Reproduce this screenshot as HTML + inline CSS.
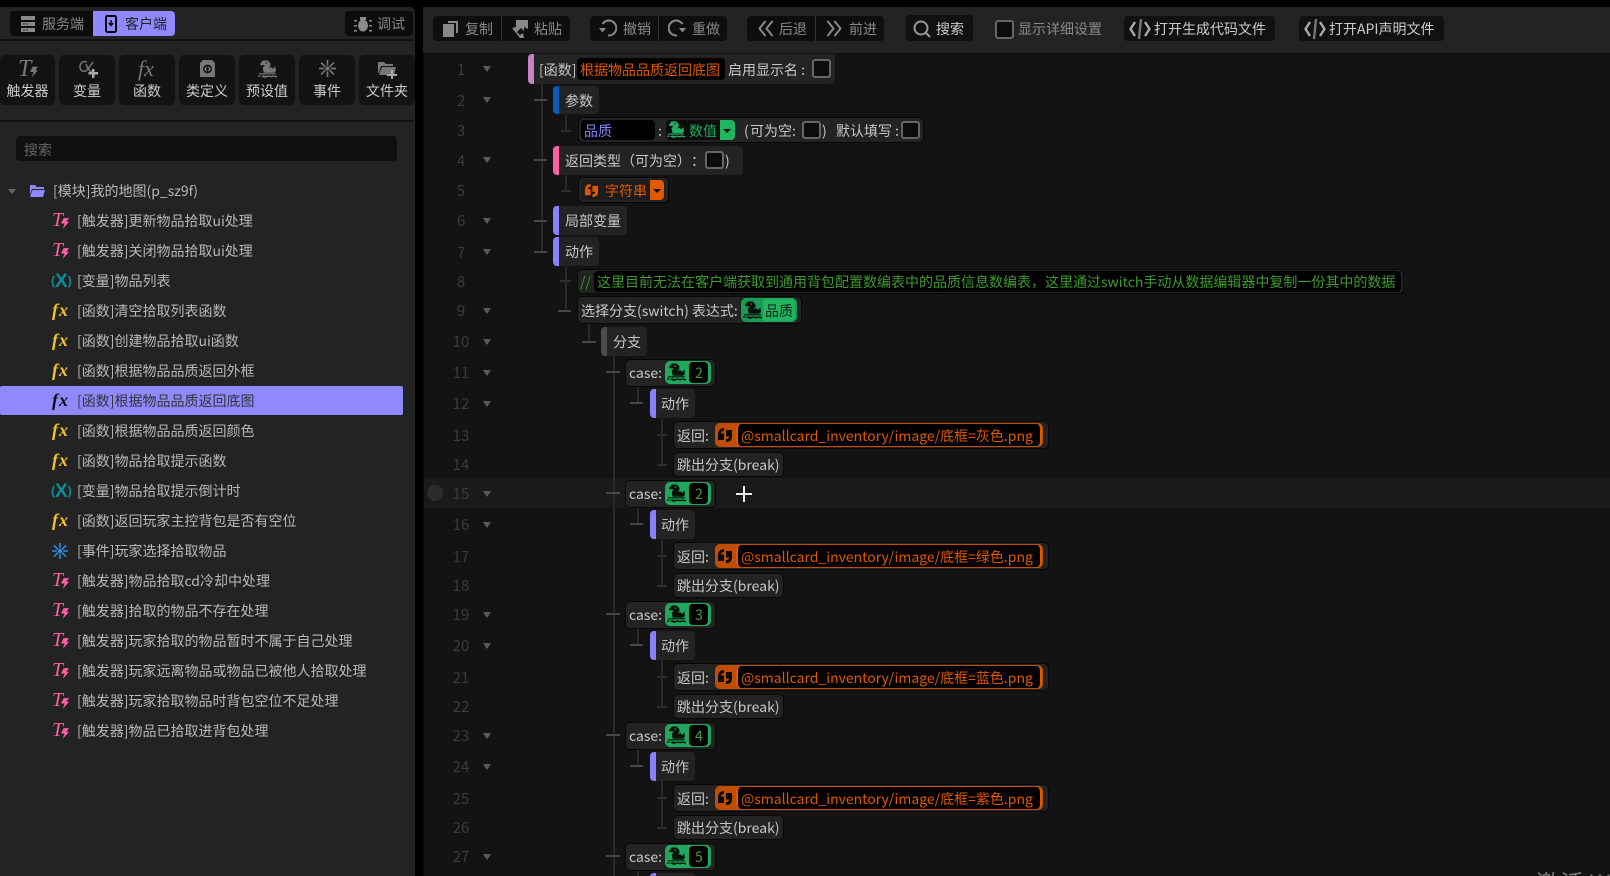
<!DOCTYPE html>
<html lang="zh"><head><meta charset="utf-8"><title>编辑器</title>
<style>
html,body{margin:0;padding:0;background:#000;width:1610px;height:876px;overflow:hidden}
body{position:relative;font:14px "Noto Sans CJK SC","Liberation Sans",sans-serif;color:#c8c8c8;text-spacing-trim:space-all}
div,span,svg{position:absolute;white-space:nowrap}
.bx{background:#111;border-radius:4px}
.g{color:#888}.w{color:#ccc}
.tl{top:16px;height:25px;line-height:27px}
.tool{top:55px;height:50px;width:56px;background:#131313;border-radius:5px;text-align:center;color:#ccc}
.tool .lb{left:0;width:100%;top:25px;line-height:22px}
.it{left:0;width:403px;height:30px;line-height:30px;color:#b8b8b8}
.it .tx{left:77px;top:0}
.fx{left:52px;top:0;font:italic bold 18px/29px "Liberation Serif",serif;color:#f2c32c;letter-spacing:1px}
.T{left:52px;top:0;font:italic 20px/28px "Liberation Serif",serif;color:#ff5fa2}
.bolt{left:61px;top:12px;fill:#ff5fa2}
.X{left:51px;top:0;font:bold 19px/30px "Liberation Sans",sans-serif;color:#0e8d96}
.X small{font-size:12px;vertical-align:2px}
.r{left:0;width:1610px}
.r>span{top:1px;height:100%}
.r>.k,.r>.kb,.r>.bar{top:0}
.k{background:#232323;border-radius:4px;box-sizing:border-box}
.kb{background:#232323;border:1px solid #070707;border-radius:5px;box-sizing:border-box}
.bar{width:6px;border-radius:4px 0 0 4px}
.n{left:441px;width:40px;height:24px;line-height:26px;text-align:center;color:#3b3b3b;font-size:15px}
.tr{left:483px;width:0;height:0;border:4px solid transparent;border-top:6px solid #5a5a5a;border-bottom:0}
.c{width:19px;height:19px;border:2px solid #666;border-radius:3px;background:#0c0c0c;box-sizing:border-box}
.v{width:2px;background:#292929}.h{height:2px;background:#484848}.d{height:2px;background:#2e2e2e}
.or{color:#e05800}
.case{background:#1fa85e;border-radius:5px}
.gr{left:0;width:1610px;height:121px}
</style></head><body>
<svg width="0" height="0" style="position:absolute"><defs>
<symbol id="frog" viewBox="0 0 20 18"><path fill-rule="evenodd" d="M2 4 5 0h5l3 3v3l-2 2 3-1 2 2 2-3 1 5-2 2H6L5 8l2-3H3zM8 2v1.500h1.500V2z"/><path d="M1 13.500h18v1.200H1zM0 16c2-1 3 1 5 0s3 1 5 0 3 1 5 0 3 1 5 0v1.500c-2 1-3-1-5 0s-3-1-5 0-3 1-5 0-3-1-5 0z"/></symbol>
<symbol id="q" viewBox="0 0 16 16"><path d="M1 8C1 3.500 3 1 7 1v3C5 4 4 5 4 6.500h3V13H1zM9 3h6v6.500c0 3.500-2 5.500-6 5.500v-3c2 0 3-1 3-2.500H9z"/></symbol>
<symbol id="ev" viewBox="0 0 20 20"><path d="M10 0v6.500M10 13.500V20M2.500 3l5 5M12.500 12l5 5M17.500 3l-5 5M7.500 12l-5 5M0 10h6M14 10h6" fill="none" stroke="currentColor" stroke-width="2"/><circle cx="10" cy="10" r="2.500" fill="currentColor"/></symbol>
<symbol id="bolt" viewBox="0 0 9 12"><path d="M3 0h6L6 4h3L2 12l2-6H0z"/></symbol>
<symbol id="code" viewBox="0 0 22 24"><path d="M6 5 1.500 12 6 19M16 5l4.500 7-4.500 7" fill="none" stroke="#aaa" stroke-width="2.400"/><path d="M12 2 10 22" stroke="#777" stroke-width="2.400"/></symbol>
</defs></svg>

<!-- left panel -->
<div style="left:0;top:7px;width:415px;height:869px;background:#232323;border-radius:0 5px 0 0"></div>
<div style="left:0;top:39px;width:413px;height:2px;background:#111"></div>
<div style="left:0;top:120px;width:413px;height:2px;background:#111"></div>
<div class="bx" style="left:10px;top:11px;width:165px;height:25px;background:#0c0c0c"></div>
<div style="left:93px;top:11px;width:82px;height:25px;background:#9088ff;border-radius:0 4px 4px 0"></div>
<svg style="left:21px;top:16px" width="14" height="16" viewBox="0 0 14 16"><path fill="#8a8a8a" d="M0 0h14v4H0zM0 6h14v4H0zM0 12h14v4H0z"/><path fill="#222" d="M2 13.500h2v1H2zM5 13.500h2v1H5zM2 7.500h2v1H2zM5 7.500h2v1H5z"/></svg>
<div class="g tl" style="left:42px;top:11px">服务端</div>
<svg style="left:105px;top:15px" width="12" height="18" viewBox="0 0 12 18"><rect x="1" y="1" width="10" height="16" rx="1.500" fill="none" stroke="#000" stroke-width="2"/><path d="M6 5v5M3.800 8 6 10.500 8.200 8" fill="none" stroke="#000" stroke-width="1.500"/></svg>
<div class="tl" style="left:125px;top:11px;color:#222">客户端</div>
<div class="bx" style="left:345px;top:11px;width:68px;height:25px;background:#0c0c0c"></div>
<svg style="left:354px;top:16px" width="18" height="16" viewBox="0 0 18 16" fill="#8a8a8a"><ellipse cx="9" cy="9.500" rx="5" ry="6"/><rect x="6" y="1" width="6" height="3"/><path d="M0 4h3v1.500H0zM15 4h3v1.500h-3zM0 9h3v1.500H0zM15 9h3v1.500h-3zM0 14h3v1.500H0zM15 14h3v1.500h-3z"/></svg>
<div class="g tl" style="left:377px;top:11px">调试</div>

<div class="tool" style="left:0;width:55px"><span class="lb">触发器</span>
 <span style="left:18px;top:2px;font:italic 24px/24px 'Liberation Serif',serif;color:#777">T</span><svg style="left:30px;top:11px;fill:#777" width="8" height="12"><use href="#bolt"/></svg></div>
<div class="tool" style="left:59px"><span class="lb">变量</span>
 <svg style="left:20px;top:5px" width="22" height="18" viewBox="0 0 22 18" fill="none"><path d="M8 2C3 0 1 4 1 7s4 7 8 2l5-7M7 4c2 6 4 8 8 8" stroke="#777" stroke-width="1.500"/><path d="M13 9h2.500v3H19v2.500h-3.500V18H13v-3.500H9.500V12H13z" fill="#aaa"/></svg></div>
<div class="tool" style="left:119px"><span class="lb">函数</span><span style="left:19px;top:1px;font:italic 22px/26px 'Liberation Serif',serif;color:#777">fx</span></div>
<div class="tool" style="left:179px"><span class="lb">类定义</span>
 <svg style="left:21px;top:5px" width="15" height="17" viewBox="0 0 15 17"><path d="M3 0h9l3 3v14H0V3z" fill="#777"/><circle cx="7.500" cy="9" r="4.500" fill="#1c1c1c"/><path d="M6.500 7 5 9l1.500 2M8.500 7 10 9l-1.500 2" fill="none" stroke="#999"/></svg></div>
<div class="tool" style="left:239px"><span class="lb">预设值</span><svg style="left:19px;top:5px;fill:#777" width="19" height="18"><use href="#frog"/></svg></div>
<div class="tool" style="left:299px"><span class="lb">事件</span><svg style="left:20px;top:5px;color:#777" width="17" height="17"><use href="#ev"/></svg></div>
<div class="tool" style="left:359px"><span class="lb">文件夹</span>
 <svg style="left:19px;top:7px" width="21" height="17" viewBox="0 0 21 17"><path d="M0 0h6l2 2h7v2H3L1 11H0zM4 5h14l-2 8H1z" fill="#777"/><path d="M13 8h2v4h4v2h-4v3h-2v-3H9v-2h4z" fill="#aaa"/></svg></div>

<div class="bx" style="left:16px;top:136px;width:381px;height:25px;line-height:28px;background:#101010"><span style="left:8px;top:0;color:#666">搜索</span></div>

<div style="left:8px;top:189px;width:0;height:0;border:4px solid transparent;border-top:5px solid #666;border-bottom:0"></div>
<svg style="left:29px;top:184px" width="16" height="14" viewBox="0 0 16 14"><path d="M0 1h6l1.500 2H15v2H3L1 11V1zM3.500 6H16l-2 7H1z" fill="#9088ff"/></svg>
<div class="it" style="top:176px"><span class="tx" style="left:53px">[模块]我的地图(p_sz9f)</span></div>

<div class="it" style="top:206px"><span class="T">T</span><svg class="bolt" width="8" height="11"><use href="#bolt"/></svg><span class="tx">[触发器]更新物品拾取ui处理</span></div>
<div class="it" style="top:236px"><span class="T">T</span><svg class="bolt" width="8" height="11"><use href="#bolt"/></svg><span class="tx">[触发器]关闭物品拾取ui处理</span></div>
<div class="it" style="top:266px"><span class="X"><small>(</small>X<small>)</small></span><span class="tx">[变量]物品列表</span></div>
<div class="it" style="top:296px"><span class="fx">fx</span><span class="tx">[函数]清空拾取列表函数</span></div>
<div class="it" style="top:326px"><span class="fx">fx</span><span class="tx">[函数]创建物品拾取ui函数</span></div>
<div class="it" style="top:356px"><span class="fx">fx</span><span class="tx">[函数]根据物品品质返回外框</span></div>
<div class="it" style="top:386px;height:29px;background:#9088ff;border-radius:2px;color:#333"><span class="fx" style="color:#0c0c0c">fx</span><span class="tx">[函数]根据物品品质返回底图</span></div>
<div class="it" style="top:416px"><span class="fx">fx</span><span class="tx">[函数]根据物品品质返回颜色</span></div>
<div class="it" style="top:446px"><span class="fx">fx</span><span class="tx">[函数]物品拾取提示函数</span></div>
<div class="it" style="top:476px"><span class="X"><small>(</small>X<small>)</small></span><span class="tx">[变量]物品拾取提示倒计时</span></div>
<div class="it" style="top:506px"><span class="fx">fx</span><span class="tx">[函数]返回玩家主控背包是否有空位</span></div>
<div class="it" style="top:536px"><svg style="left:52px;top:7px;color:#2a8fe6" width="16" height="16"><use href="#ev"/></svg><span class="tx">[事件]玩家选择拾取物品</span></div>
<div class="it" style="top:566px"><span class="T">T</span><svg class="bolt" width="8" height="11"><use href="#bolt"/></svg><span class="tx">[触发器]物品拾取cd冷却中处理</span></div>
<div class="it" style="top:596px"><span class="T">T</span><svg class="bolt" width="8" height="11"><use href="#bolt"/></svg><span class="tx">[触发器]拾取的物品不存在处理</span></div>
<div class="it" style="top:626px"><span class="T">T</span><svg class="bolt" width="8" height="11"><use href="#bolt"/></svg><span class="tx">[触发器]玩家拾取的物品暂时不属于自己处理</span></div>
<div class="it" style="top:656px"><span class="T">T</span><svg class="bolt" width="8" height="11"><use href="#bolt"/></svg><span class="tx">[触发器]玩家远离物品或物品已被他人拾取处理</span></div>
<div class="it" style="top:686px"><span class="T">T</span><svg class="bolt" width="8" height="11"><use href="#bolt"/></svg><span class="tx">[触发器]玩家拾取物品时背包空位不足处理</span></div>
<div class="it" style="top:716px"><span class="T">T</span><svg class="bolt" width="8" height="11"><use href="#bolt"/></svg><span class="tx">[触发器]物品已拾取进背包处理</span></div>

<!-- right top bar -->
<div style="left:423px;top:7px;width:1187px;height:46px;background:#232323"></div>
<div style="left:423px;top:53px;width:1187px;height:823px;background:#131313"></div>
<div style="left:423px;top:53px;width:1px;height:823px;background:#0a0a0a"></div>

<div class="bx" style="left:433px;top:16px;width:137px;height:25px;background:#0e0e0e"></div><div style="left:501px;top:16px;width:1px;height:25px;background:#333"></div>
<svg style="left:443px;top:21px" width="15" height="16" viewBox="0 0 15 16" fill="#888"><path d="M5 0h10v12h-2V2H5z"/><path d="M0 3h11v13H0z"/></svg>
<div class="g tl" style="left:465px">复制</div>
<svg style="left:512px;top:20px" width="16" height="18" viewBox="0 0 16 18" fill="#888"><path d="M4 0h12v9l-4-2v4L9 8 5 12l3 3 3-2 1 5H8L0 8l4-1z"/></svg>
<div class="g tl" style="left:534px">粘贴</div>

<div class="bx" style="left:590px;top:16px;width:137px;height:25px;background:#0e0e0e"></div><div style="left:658px;top:16px;width:1px;height:25px;background:#333"></div>
<svg style="left:599px;top:19px" width="18" height="18" viewBox="0 0 18 18" fill="none" stroke="#888" stroke-width="2"><path d="M3.500 5A7.500 7.500 0 1 1 9 16.500"/><path d="M0 9h7l-3.500 4.500z" fill="#888" stroke="none"/></svg>
<div class="g tl" style="left:623px">撤销</div>
<svg style="left:668px;top:19px" width="18" height="18" viewBox="0 0 18 18" fill="none" stroke="#888" stroke-width="2"><path d="M14.500 5A7.500 7.500 0 1 0 9 16.500"/><path d="M11 9h7l-3.500 4.500z" fill="#888" stroke="none"/></svg>
<div class="g tl" style="left:692px">重做</div>

<div class="bx" style="left:747px;top:16px;width:137px;height:25px;background:#0e0e0e"></div><div style="left:815px;top:16px;width:1px;height:25px;background:#333"></div>
<svg style="left:758px;top:20px" width="16" height="17" viewBox="0 0 16 17" fill="none" stroke="#888" stroke-width="2"><path d="M7.500 1 1.500 8.500l6 7.500M14.500 1l-6 7.500 6 7.500"/></svg>
<div class="g tl" style="left:779px">后退</div>
<svg style="left:826px;top:20px" width="16" height="17" viewBox="0 0 16 17" fill="none" stroke="#888" stroke-width="2"><path d="M1.500 1l6 7.500-6 7.500M8.500 1l6 7.500-6 7.500"/></svg>
<div class="g tl" style="left:849px">前进</div>

<div class="bx" style="left:906px;top:15px;width:67px;height:26px;background:#111"></div>
<svg style="left:913px;top:20px" width="18" height="18" viewBox="0 0 18 18" fill="none" stroke="#999" stroke-width="2"><circle cx="8" cy="8" r="6.500"/><path d="M13 13l4 4"/></svg>
<div class="w tl" style="left:936px">搜索</div>
<div class="c" style="left:995px;top:20px"></div>
<div class="g tl" style="left:1018px">显示详细设置</div>
<div class="bx" style="left:1124px;top:16px;width:151px;height:25px;background:#111"></div>
<svg style="left:1129px;top:17px" width="22" height="24"><use href="#code"/></svg>
<div class="w tl" style="left:1154px">打开生成代码文件</div>
<div class="bx" style="left:1299px;top:16px;width:145px;height:25px;background:#111"></div>
<svg style="left:1304px;top:17px" width="22" height="24"><use href="#code"/></svg>
<div class="w tl" style="left:1329px">打开API声明文件</div>

<!-- row 15 highlight -->
<div style="left:424px;top:478px;width:1186px;height:30px;background:#1a1a1a"></div>
<div style="left:427px;top:485px;width:16px;height:16px;border-radius:50%;background:#2c2c2c"></div>

<!-- guides -->
<div class="v" style="left:541px;top:84px;height:168px"></div>
<div class="h" style="left:534px;top:99px;width:13px"></div>
<div class="h" style="left:534px;top:159px;width:13px"></div>
<div class="h" style="left:534px;top:220px;width:13px"></div>
<div class="h" style="left:534px;top:251px;width:13px"></div>
<div class="v" style="left:565px;top:114px;height:17px"></div><div class="d" style="left:561px;top:130px;width:10px"></div>
<div class="v" style="left:565px;top:175px;height:16px"></div><div class="d" style="left:561px;top:190px;width:10px"></div>
<div class="v" style="left:565px;top:266px;height:45px"></div><div class="d" style="left:560px;top:280px;width:11px"></div><div class="h" style="left:558px;top:310px;width:13px"></div>
<div class="v" style="left:588px;top:324px;height:18px"></div><div class="h" style="left:582px;top:341px;width:14px"></div>
<div class="v" style="left:613px;top:356px;height:520px"></div>

<!-- line numbers 1-10 -->
<div class="n" style="top:57px">1</div><div class="tr" style="top:66px"></div>
<div class="n" style="top:88px">2</div><div class="tr" style="top:97px"></div>
<div class="n" style="top:118px">3</div>
<div class="n" style="top:148px">4</div><div class="tr" style="top:157px"></div>
<div class="n" style="top:178px">5</div>
<div class="n" style="top:208px">6</div><div class="tr" style="top:218px"></div>
<div class="n" style="top:240px">7</div><div class="tr" style="top:249px"></div>
<div class="n" style="top:269px">8</div>
<div class="n" style="top:298px">9</div><div class="tr" style="top:308px"></div>
<div class="n" style="top:329px">10</div><div class="tr" style="top:339px"></div>

<!-- row 1 -->
<div class="r" style="top:54px;height:30px;line-height:30px">
 <span class="k" style="left:528px;width:307px"></span><span class="bar" style="left:528px;background:#c582c4"></span>
 <span style="left:539px">[函数]</span>
 <span class="bx" style="left:577px;top:4px;height:22px;width:148px;background:#000"></span>
 <span class="or" style="left:580px">根据物品品质返回底图</span>
 <span style="left:728px">启用显示名 :</span>
 <span class="c" style="left:812px;top:5px;height:19px"></span>
</div>
<!-- row 2 -->
<div class="r" style="top:86px;height:28px;line-height:28px">
 <span class="k" style="left:553px;width:46px"></span><span class="bar" style="left:553px;background:#0a5bb8"></span>
 <span style="left:565px">参数</span>
</div>
<!-- row 3 -->
<div class="r" style="top:117px;height:26px;line-height:26px">
 <span class="kb" style="left:578px;width:346px"></span>
 <span class="bx" style="left:581px;top:3px;height:20px;width:74px;background:#000"></span>
 <span style="left:584px;color:#8484f5">品质</span>
 <span style="left:658px">:</span>
 <span class="bx" style="left:666px;top:3px;height:20px;width:69px;background:#0c0c0c"></span>
 <svg style="left:667px;top:4px;fill:#1fae62" width="18" height="17"><use href="#frog"/></svg>
 <span style="left:689px;color:#1fa85e">数值</span>
 <span style="left:720px;top:3px;height:20px;width:15px;background:#1fb561;border-radius:0 4px 4px 0"></span>
 <span style="left:723px;top:12px;width:0;height:0;border:4px solid transparent;border-top:4px solid #111;border-bottom:0"></span>
 <span style="left:744px">(</span><span style="left:750px">可为空:</span>
 <span class="c" style="left:802px;top:4px;height:18px"></span>
 <span style="left:822px">)</span>
 <span style="left:836px">默认填写 :</span>
 <span class="c" style="left:901px;top:4px;height:18px"></span>
</div>
<!-- row 4 -->
<div class="r" style="top:146px;height:29px;line-height:29px">
 <span class="k" style="left:553px;width:190px"></span><span class="bar" style="left:553px;background:#ff5fa2"></span>
 <span style="left:565px">返回类型（可为空）：</span>
 <span class="c" style="left:705px;top:5px;height:18px"></span>
 <span style="left:725px">)</span>
</div>
<!-- row 5 -->
<div class="r" style="top:177px;height:26px;line-height:26px">
 <span class="kb" style="left:578px;width:91px"></span>
 <span class="bx" style="left:581px;top:3px;height:20px;width:84px;background:#1c1c1c"></span>
 <svg style="left:584px;top:6px;fill:#e05800" width="15" height="15"><use href="#q"/></svg>
 <span class="or" style="left:605px">字符串</span>
 <span style="left:650px;top:3px;height:20px;width:14px;background:#e05800;border-radius:0 4px 4px 0"></span>
 <span style="left:653px;top:12px;width:0;height:0;border:4px solid transparent;border-top:4px solid #111;border-bottom:0"></span>
</div>
<!-- row 6 -->
<div class="r" style="top:206px;height:29px;line-height:29px">
 <span class="k" style="left:553px;width:74px"></span><span class="bar" style="left:553px;background:#8a80ff"></span>
 <span style="left:565px">局部变量</span>
</div>
<!-- row 7 -->
<div class="r" style="top:237px;height:29px;line-height:29px">
 <span class="k" style="left:553px;width:46px"></span><span class="bar" style="left:553px;background:#8a80ff"></span>
 <span style="left:565px">动作</span>
</div>
<!-- row 8 -->
<div class="r" style="top:269px;height:25px;line-height:25px">
 <span class="kb" style="left:577px;width:827px"></span>
 <span style="left:580px;color:#3f9a2f">//</span>
 <span class="bx" style="left:594px;top:2px;height:21px;width:807px;background:#000"></span>
 <span style="left:597px;color:#3f9a2f">这里目前无法在客户端获取到通用背包配置数编表中的品质信息数编表，这里通过switch手动从数据编辑器中复制一份其中的数据</span>
</div>
<!-- row 9 -->
<div class="r" style="top:296px;height:28px;line-height:28px">
 <span class="kb" style="left:577px;width:225px"></span>
 <span style="left:581px">选择分支(switch) 表达式:</span>
 <span style="left:741px;top:2px;height:24px;width:56px;background:#1a9a55;border-radius:5px"></span>
 <span style="left:763px;top:3px;height:22px;width:32px;background:#1fb561;border-radius:0 4px 4px 0"></span>
 <svg style="left:743px;top:5px;fill:#061208" width="19" height="18"><use href="#frog"/></svg>
 <span style="left:765px;color:#08200f">品质</span>
</div>
<!-- row 10 -->
<div class="r" style="top:327px;height:29px;line-height:29px">
 <span class="k" style="left:601px;width:46px"></span><span class="bar" style="left:601px;background:#4d4d4d"></span>
 <span style="left:613px">分支</span>
</div>

<!-- group 1 -->
<div class="gr" style="top:359px">
 <div class="n" style="top:1px">11</div><div class="tr" style="top:11px"></div>
 <div class="n" style="top:32px">12</div><div class="tr" style="top:42px"></div>
 <div class="n" style="top:64px">13</div><div class="n" style="top:93px">14</div>
 <div class="h" style="left:606px;top:12px;width:14px"></div>
 <div class="v" style="left:637px;top:28px;height:17px"></div><div class="h" style="left:630px;top:43px;width:13px"></div>
 <div class="v" style="left:661px;top:59px;height:47px"></div><div class="d" style="left:657px;top:75px;width:10px"></div><div class="d" style="left:657px;top:105px;width:10px"></div>
 <div class="r" style="top:0;height:28px;line-height:28px"><span class="kb" style="left:625px;width:91px"></span><span style="left:629px;top:0">case:</span><span class="case" style="left:665px;top:2px;height:23px;width:46px"></span><svg style="left:667px;top:4px;fill:#061208" width="19" height="18"><use href="#frog"/></svg><span class="bx" style="left:689px;top:3px;height:21px;width:19px;background:#000"></span><span style="left:695px;color:#4a9a30;top:0">2</span></div>
 <div class="r" style="top:30px;height:29px;line-height:29px"><span class="k" style="left:650px;width:45px"></span><span class="bar" style="left:650px;background:#8a80ff"></span><span style="left:661px">动作</span></div>
 <div class="r" style="top:62px;height:28px;line-height:28px"><span class="kb" style="left:673px;width:376px"></span><span style="left:677px">返回:</span><span style="left:715px;top:2px;height:24px;width:328px;background:#c14e00;border-radius:5px"></span><svg style="left:717px;top:6px;fill:#0c0c0c" width="16" height="16"><use href="#q"/></svg><span style="left:736px;top:3px;height:22px;width:306px;background:#000;border:solid #e05800;border-width:0 2px;border-radius:5px;box-sizing:border-box"></span><span class="or" style="left:741px">@smallcard_inventory/image/底框=灰色.png</span></div>
 <div class="r" style="top:93px;height:25px;line-height:25px"><span class="kb" style="left:673px;width:111px"></span><span style="left:677px">跳出分支(break)</span></div>
</div>

<!-- group 2 -->
<div class="gr" style="top:480px">
 <div class="n" style="top:1px">15</div><div class="tr" style="top:11px"></div>
 <div class="n" style="top:32px">16</div><div class="tr" style="top:42px"></div>
 <div class="n" style="top:64px">17</div><div class="n" style="top:93px">18</div>
 <div class="h" style="left:606px;top:12px;width:14px"></div>
 <div class="v" style="left:637px;top:28px;height:17px"></div><div class="h" style="left:630px;top:43px;width:13px"></div>
 <div class="v" style="left:661px;top:59px;height:47px"></div><div class="d" style="left:657px;top:75px;width:10px"></div><div class="d" style="left:657px;top:105px;width:10px"></div>
 <div class="r" style="top:0;height:28px;line-height:28px"><span class="kb" style="left:625px;width:91px"></span><span style="left:629px;top:0">case:</span><span class="case" style="left:665px;top:2px;height:23px;width:46px"></span><svg style="left:667px;top:4px;fill:#061208" width="19" height="18"><use href="#frog"/></svg><span class="bx" style="left:689px;top:3px;height:21px;width:19px;background:#000"></span><span style="left:695px;color:#4a9a30;top:0">2</span></div>
 <div class="r" style="top:30px;height:29px;line-height:29px"><span class="k" style="left:650px;width:45px"></span><span class="bar" style="left:650px;background:#8a80ff"></span><span style="left:661px">动作</span></div>
 <div class="r" style="top:62px;height:28px;line-height:28px"><span class="kb" style="left:673px;width:376px"></span><span style="left:677px">返回:</span><span style="left:715px;top:2px;height:24px;width:328px;background:#c14e00;border-radius:5px"></span><svg style="left:717px;top:6px;fill:#0c0c0c" width="16" height="16"><use href="#q"/></svg><span style="left:736px;top:3px;height:22px;width:306px;background:#000;border:solid #e05800;border-width:0 2px;border-radius:5px;box-sizing:border-box"></span><span class="or" style="left:741px">@smallcard_inventory/image/底框=绿色.png</span></div>
 <div class="r" style="top:93px;height:25px;line-height:25px"><span class="kb" style="left:673px;width:111px"></span><span style="left:677px">跳出分支(break)</span></div>
</div>
<svg style="left:736px;top:486px" width="16" height="16"><path d="M7 0h2v7h7v2H9v7H7V9H0V7h7z" fill="#eee"/></svg>

<!-- group 3 -->
<div class="gr" style="top:601px">
 <div class="n" style="top:1px">19</div><div class="tr" style="top:11px"></div>
 <div class="n" style="top:32px">20</div><div class="tr" style="top:42px"></div>
 <div class="n" style="top:64px">21</div><div class="n" style="top:93px">22</div>
 <div class="h" style="left:606px;top:12px;width:14px"></div>
 <div class="v" style="left:637px;top:28px;height:17px"></div><div class="h" style="left:630px;top:43px;width:13px"></div>
 <div class="v" style="left:661px;top:59px;height:47px"></div><div class="d" style="left:657px;top:75px;width:10px"></div><div class="d" style="left:657px;top:105px;width:10px"></div>
 <div class="r" style="top:0;height:28px;line-height:28px"><span class="kb" style="left:625px;width:91px"></span><span style="left:629px;top:0">case:</span><span class="case" style="left:665px;top:2px;height:23px;width:46px"></span><svg style="left:667px;top:4px;fill:#061208" width="19" height="18"><use href="#frog"/></svg><span class="bx" style="left:689px;top:3px;height:21px;width:19px;background:#000"></span><span style="left:695px;color:#4a9a30;top:0">3</span></div>
 <div class="r" style="top:30px;height:29px;line-height:29px"><span class="k" style="left:650px;width:45px"></span><span class="bar" style="left:650px;background:#8a80ff"></span><span style="left:661px">动作</span></div>
 <div class="r" style="top:62px;height:28px;line-height:28px"><span class="kb" style="left:673px;width:376px"></span><span style="left:677px">返回:</span><span style="left:715px;top:2px;height:24px;width:328px;background:#c14e00;border-radius:5px"></span><svg style="left:717px;top:6px;fill:#0c0c0c" width="16" height="16"><use href="#q"/></svg><span style="left:736px;top:3px;height:22px;width:306px;background:#000;border:solid #e05800;border-width:0 2px;border-radius:5px;box-sizing:border-box"></span><span class="or" style="left:741px">@smallcard_inventory/image/底框=蓝色.png</span></div>
 <div class="r" style="top:93px;height:25px;line-height:25px"><span class="kb" style="left:673px;width:111px"></span><span style="left:677px">跳出分支(break)</span></div>
</div>

<!-- group 4 -->
<div class="gr" style="top:722px">
 <div class="n" style="top:1px">23</div><div class="tr" style="top:11px"></div>
 <div class="n" style="top:32px">24</div><div class="tr" style="top:42px"></div>
 <div class="n" style="top:64px">25</div><div class="n" style="top:93px">26</div>
 <div class="h" style="left:606px;top:12px;width:14px"></div>
 <div class="v" style="left:637px;top:28px;height:17px"></div><div class="h" style="left:630px;top:43px;width:13px"></div>
 <div class="v" style="left:661px;top:59px;height:47px"></div><div class="d" style="left:657px;top:75px;width:10px"></div><div class="d" style="left:657px;top:105px;width:10px"></div>
 <div class="r" style="top:0;height:28px;line-height:28px"><span class="kb" style="left:625px;width:91px"></span><span style="left:629px;top:0">case:</span><span class="case" style="left:665px;top:2px;height:23px;width:46px"></span><svg style="left:667px;top:4px;fill:#061208" width="19" height="18"><use href="#frog"/></svg><span class="bx" style="left:689px;top:3px;height:21px;width:19px;background:#000"></span><span style="left:695px;color:#4a9a30;top:0">4</span></div>
 <div class="r" style="top:30px;height:29px;line-height:29px"><span class="k" style="left:650px;width:45px"></span><span class="bar" style="left:650px;background:#8a80ff"></span><span style="left:661px">动作</span></div>
 <div class="r" style="top:62px;height:28px;line-height:28px"><span class="kb" style="left:673px;width:376px"></span><span style="left:677px">返回:</span><span style="left:715px;top:2px;height:24px;width:328px;background:#c14e00;border-radius:5px"></span><svg style="left:717px;top:6px;fill:#0c0c0c" width="16" height="16"><use href="#q"/></svg><span style="left:736px;top:3px;height:22px;width:306px;background:#000;border:solid #e05800;border-width:0 2px;border-radius:5px;box-sizing:border-box"></span><span class="or" style="left:741px">@smallcard_inventory/image/底框=紫色.png</span></div>
 <div class="r" style="top:93px;height:25px;line-height:25px"><span class="kb" style="left:673px;width:111px"></span><span style="left:677px">跳出分支(break)</span></div>
</div>

<!-- group 5 partial -->
<div class="gr" style="top:843px;height:33px;overflow:hidden">
 <div class="n" style="top:1px">27</div><div class="tr" style="top:11px"></div>
 <div class="h" style="left:606px;top:12px;width:14px"></div>
 <div class="v" style="left:637px;top:28px;height:5px"></div>
 <div class="r" style="top:0;height:28px;line-height:28px"><span class="kb" style="left:625px;width:91px"></span><span style="left:629px;top:0">case:</span><span class="case" style="left:665px;top:2px;height:23px;width:46px"></span><svg style="left:667px;top:4px;fill:#061208" width="19" height="18"><use href="#frog"/></svg><span class="bx" style="left:689px;top:3px;height:21px;width:19px;background:#000"></span><span style="left:695px;color:#4a9a30;top:0">5</span></div>
 <div class="r" style="top:30px;height:29px;line-height:29px"><span class="k" style="left:650px;width:45px"></span><span class="bar" style="left:650px;background:#8a80ff"></span></div>
</div>

<!-- watermark -->
<div style="left:1536px;top:866px;width:74px;height:10px;overflow:hidden"><div style="left:0;top:0;font-size:24px;line-height:32px;color:#777">激活 Windows</div></div>
</body></html>
